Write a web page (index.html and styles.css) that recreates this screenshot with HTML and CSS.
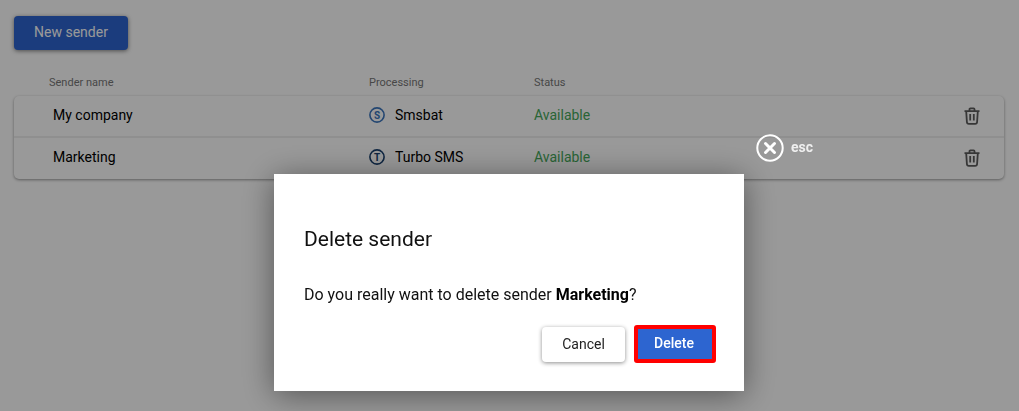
FILE: index.html
```html
<!DOCTYPE html>
<html lang="en">
<head>
<meta charset="utf-8">
<title>Senders</title>
<link rel="stylesheet" href="styles.css">
</head>
<body>
<main class="page">
  <button class="btn-new" type="button">New sender</button>
  <div class="cols">
    <span class="col-name">Sender name</span>
    <span class="col-proc">Processing</span>
    <span class="col-status">Status</span>
  </div>
  <div class="card">
    <div class="row">
      <span class="col-name cell-name">My company</span>
      <span class="col-proc cell-proc">
        <svg class="proc-icon smsbat" viewBox="0 0 16 16"><circle cx="8" cy="8" r="7.100" fill="none" stroke="currentColor" stroke-width="1.600"/><text x="8" y="11.600" text-anchor="middle" class="proc-letter">S</text></svg>
        Smsbat
      </span>
      <span class="col-status cell-status">Available</span>
      <svg class="trash" viewBox="0 0 16 18"><path d="M.5 4.200h15M5.500 4V2.300c0-.5.4-.9.9-.9h3.200c.5 0 .9.4.9.9V4M2.200 4.200l.7 10.800c.1 1.100.8 1.800 1.900 1.800h6.400c1.100 0 1.800-.7 1.900-1.800l.7-10.800M6.200 7v6.500M9.800 7v6.500" fill="none" stroke="currentColor" stroke-width="1.800"/></svg>
    </div>
    <div class="row">
      <span class="col-name cell-name">Marketing</span>
      <span class="col-proc cell-proc">
        <svg class="proc-icon turbo" viewBox="0 0 16 16"><circle cx="8" cy="8" r="7.100" fill="none" stroke="currentColor" stroke-width="1.600"/><text x="8" y="11.600" text-anchor="middle" class="proc-letter">T</text></svg>
        Turbo SMS
      </span>
      <span class="col-status cell-status">Available</span>
      <svg class="trash" viewBox="0 0 16 18"><path d="M.5 4.200h15M5.500 4V2.300c0-.5.4-.9.9-.9h3.200c.5 0 .9.4.9.9V4M2.200 4.200l.7 10.800c.1 1.100.8 1.800 1.900 1.800h6.400c1.100 0 1.800-.7 1.900-1.800l.7-10.800M6.200 7v6.500M9.800 7v6.500" fill="none" stroke="currentColor" stroke-width="1.800"/></svg>
    </div>
  </div>
</main>
<div class="overlay"></div>
<div class="esc">
  <svg class="esc-icon" viewBox="0 0 28 28"><circle cx="14" cy="14" r="12.700" fill="none" stroke="#fff" stroke-width="2"/><path d="M9.500 9.500l9 9M18.500 9.500l-9 9" stroke="#fff" stroke-width="3" stroke-linecap="round"/></svg>
  <span class="esc-label">esc</span>
</div>
<section class="modal">
  <h2 class="modal-title">Delete sender</h2>
  <p class="modal-text">Do you really want to delete sender <b>Marketing</b>?</p>
  <div class="modal-actions">
    <button class="btn-cancel" type="button">Cancel</button>
    <button class="btn-delete" type="button">Delete</button>
  </div>
</section>
</body>
</html>
```
FILE: styles.css
```css
* { box-sizing: border-box; }
html, body { margin: 0; height: 100%; overflow: hidden; }
body { background: #fff; font-family: Roboto, "Liberation Sans", sans-serif; color: #000; }
.page { padding: 16px 14px 0; }
button { font-family: inherit; cursor: pointer; }
.btn-new {
  display: block; width: 114px; height: 34px; border: 0; border-radius: 4px;
  background: #2d65d0; color: #fff; font-size: 14px; font-weight: 400; padding: 0 0 2px;
  box-shadow: 0 1px 4px rgba(0,0,0,.5);
}
.cols {
  display: flex; height: 20px; margin-top: 22px; align-items: center;
  font-size: 11px; color: #777;
}
.cols .col-name { width: 320px; margin-left: 35px; }
.cols .col-proc { width: 165px; }
.card {
  margin-top: 4px; margin-right: 1px; border-radius: 5px; background: #fff;
  box-shadow: 0 1px 3px rgba(0,0,0,.4);
}
.row {
  display: flex; align-items: center; height: 42px; padding-bottom: 2px; font-size: 14px;
  border-bottom: 2px solid #eee;
}
.row:last-child { border-bottom: 0; height: 41px; padding-bottom: 3px; }
.cell-name { width: 316px; margin-left: 39px; }
.cell-proc { width: 165px; display: flex; align-items: center; }
.cell-status { flex: 1; color: #45a85a; }
.proc-icon { width: 16px; height: 16px; margin-right: 10px; flex: none; }
.smsbat { color: #3b75bd; }
.turbo { color: #183f6d; }
.proc-letter { font-size: 10px; font-weight: 700; fill: currentColor; font-family: Roboto, sans-serif; }
.trash { width: 16px; height: 18px; margin: 2px 24px 0 0; color: #5c5c5c; flex: none; }
.overlay { position: fixed; inset: 0; background: rgba(0,0,0,.4); }
.esc { position: fixed; left: 756px; top: 134px; display: flex; color: #fff; }
.esc-icon { width: 28px; height: 28px; }
.esc-label { font-size: 14px; font-weight: 700; margin-left: 7px; margin-top: 6px; line-height: 15px; color: #eee; }
.modal {
  position: fixed; left: 274px; top: 174px; width: 470px; height: 217px;
  background: #fff; padding: 52px 30px 0;
  box-shadow: 0 4px 30px rgba(0,0,0,.45);
}
.modal-title { margin: 0; font-size: 21px; font-weight: 400; line-height: 26px; color: #111; }
.modal-text { margin: 33px 0 0; font-size: 16px; line-height: 20px; color: #111; }
.modal-text b { font-weight: 700; color: #000; }
.modal-actions { display: flex; justify-content: flex-end; gap: 9px; margin-top: 20px; margin-right: -2px; align-items: center; }
.btn-cancel {
  width: 83px; height: 35px; border: 0; border-radius: 4px; background: #fff;
  font-size: 14px; color: #222; box-shadow: 0 1px 4px rgba(0,0,0,.45);
}
.btn-delete {
  width: 82px; height: 38px; border: 4px solid #f00; border-radius: 3px;
  background: #2d65d0; color: #fff; font-size: 14px; font-weight: 500; padding: 0 2px 2px 0;
}
```
